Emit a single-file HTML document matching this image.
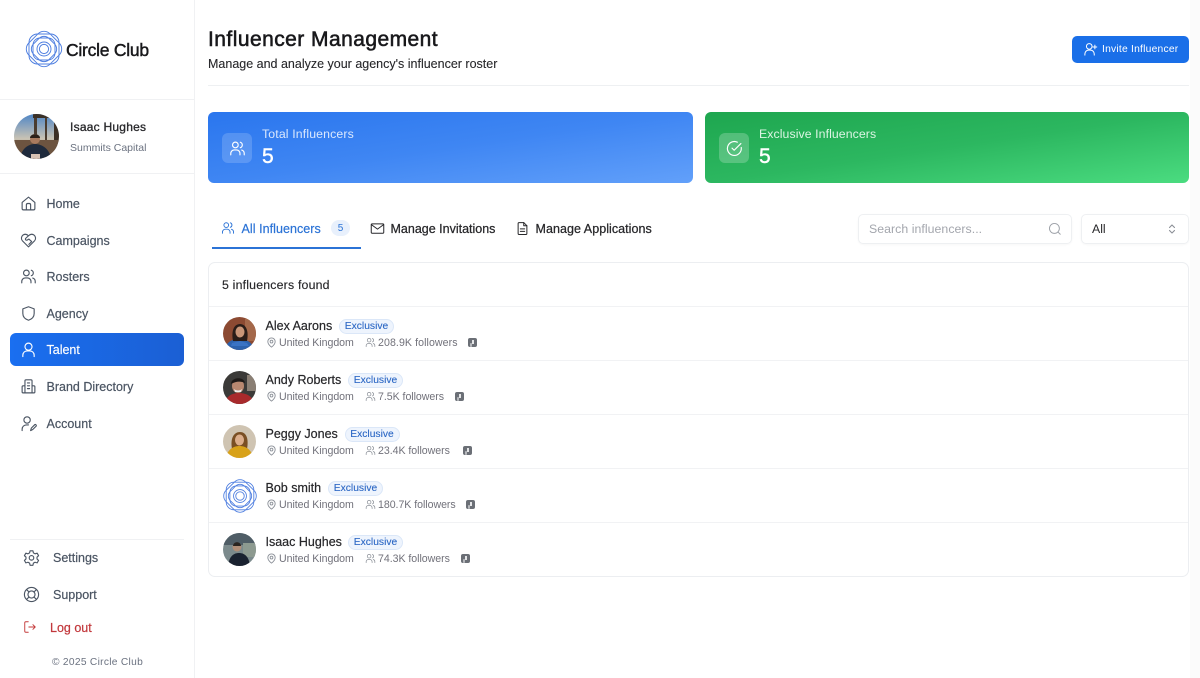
<!DOCTYPE html>
<html lang="en">
<head>
<meta charset="utf-8">
<title>Influencer Management</title>
<style>
*{box-sizing:border-box;margin:0;padding:0}
html,body{width:1200px;height:678px;overflow:hidden;background:#fff;font-family:"Liberation Sans",sans-serif;color:#18181b}
.t{position:absolute;white-space:nowrap;line-height:1}
svg{position:absolute;display:block;overflow:visible}
.i{fill:none;stroke:currentColor;stroke-width:1.6;stroke-linecap:round;stroke-linejoin:round}
.box{position:absolute}
.nav{font-size:12.5px;color:#4b5563;letter-spacing:0;-webkit-text-stroke:.2px #4b5563}
.nicon{color:#4b5563}
.name{font-size:12.5px;color:#27272a;letter-spacing:0;-webkit-text-stroke:.2px #27272a}
.sub{font-size:10.6px;color:#71717a;letter-spacing:-.04px}
.badge{position:absolute;height:15px;border-radius:8px;background:#eef4fd;border:1px solid #dbe7f8;color:#2a66c4;font-size:10.3px;line-height:13px;text-align:center;letter-spacing:0;-webkit-text-stroke:.1px #2a66c4}
.sep{position:absolute;left:209px;width:979px;height:1px;background:#f1f2f4}
.tk{position:absolute;width:9px;height:9px;background:#6b6f76;border-radius:2px}
.tk:after{content:"";position:absolute;left:4px;top:2px;width:2px;height:4px;background:#e4e5e7;box-shadow:-2px 3px 0 -0.2px #c9cacd}
.tab{font-size:12.5px;color:#27272a;letter-spacing:0;-webkit-text-stroke:.25px #27272a}
</style>
</head>
<body>
<svg width="0" height="0" style="position:absolute">
<defs>
<g id="logo" fill="none" stroke="#4f7fe0" stroke-width=".95">
<circle cx="0" cy="0" r="4.6"/>
<circle cx="0" cy="0" r="7"/>
<rect x="-15" y="-15" width="30" height="30" rx="8.5"/>
<rect x="-15" y="-15" width="30" height="30" rx="8.5" transform="rotate(45)"/>
<rect x="-11" y="-11" width="22" height="22" rx="7"/>
<rect x="-11" y="-11" width="22" height="22" rx="7" transform="rotate(45)"/>
</g>
<g id="users" class="i">
<circle cx="9" cy="7" r="4"/>
<path d="M2.500 21v-2a5 5 0 0 1 5-5h3a5 5 0 0 1 5 5v2"/>
<path d="M16 3.200a4 4 0 0 1 0 7.600"/>
<path d="M21.500 21v-2a5 5 0 0 0-3.500-4.800"/>
</g>
<g id="pin" class="i" style="stroke-width:2">
<path d="M12 22s-8-6-8-12a8 8 0 0 1 16 0c0 6-8 12-8 12z"/>
<circle cx="12" cy="10" r="3"/>
</g>
</defs>
</svg>

<!-- Sidebar -->
<div class="box" style="left:0;top:0;width:195px;height:678px;background:#fff;border-right:1px solid #f0f1f3"></div>
<svg style="left:44px;top:49px" width="1" height="1"><use href="#logo"/></svg>
<div class="t" style="left:66px;top:41.500px;font-size:17.500px;color:#18181b;letter-spacing:-.25px;-webkit-text-stroke:.45px #18181b">Circle Club</div>
<div class="box" style="left:0;top:99px;width:194px;height:1px;background:#f0f1f3"></div>

<svg style="left:14px;top:114px" width="45" height="45" viewBox="0 0 45 45">
<defs>
<clipPath id="c0"><circle cx="22.500" cy="22.500" r="22.500"/></clipPath>
<linearGradient id="sky" x1="0" y1="0" x2="0" y2="1"><stop offset="0" stop-color="#4f86c6"/><stop offset=".55" stop-color="#c9c3b4"/><stop offset="1" stop-color="#7a6350"/></linearGradient>
</defs>
<g clip-path="url(#c0)">
<rect width="45" height="45" fill="url(#sky)"/>
<rect x="19" y="0" width="26" height="4" fill="#3a3026"/>
<rect x="20" y="4" width="3" height="22" fill="#4a3c30"/>
<rect x="31" y="4" width="2" height="24" fill="#4a3c30"/>
<rect x="40" y="0" width="5" height="45" fill="#3c3026"/>
<rect x="0" y="26" width="45" height="19" fill="#6d5440"/>
<path d="M6 45c1-10 8-15 15-15s15 5 16 15z" fill="#1f2a3c"/>
<circle cx="21" cy="25" r="5" fill="#a87a5e"/>
<path d="M16 24c0-5 10-5 10 0z" fill="#2b2018"/>
<rect x="17" y="40" width="9" height="5" fill="#d8c2b4"/>
</g>
</svg>
<div class="t" style="left:70px;top:121px;font-size:12px;color:#27272a;letter-spacing:.24px;-webkit-text-stroke:.3px #27272a">Isaac Hughes</div>
<div class="t" style="left:70px;top:143px;font-size:10.500px;color:#6b7280;letter-spacing:0">Summits Capital</div>
<div class="box" style="left:0;top:173px;width:194px;height:1px;background:#f0f1f3"></div>

<!-- Nav -->
<svg class="nicon" style="left:20px;top:195px" width="17" height="17" viewBox="0 0 24 24"><path class="i" d="M3 10.500 12 3l9 7.500V19a2 2 0 0 1-2 2H5a2 2 0 0 1-2-2z"/><path class="i" d="M9 21v-7a2 2 0 0 1 2-2h2a2 2 0 0 1 2 2v7"/></svg>
<div class="t nav" style="left:46.500px;top:198px">Home</div>

<svg class="nicon" style="left:20px;top:232px" width="17" height="17" viewBox="0 0 24 24"><path class="i" d="M12 21 3.500 12.500A5.500 5.500 0 0 1 4 4.500c2.500-2 5.500-1.500 8 .8 2.500-2.300 5.500-2.800 8-.8a5.500 5.500 0 0 1 .5 8z"/><path class="i" d="M12 5.300 8 9c-1 1 0 3 2 2.500l2.500-1.500 4 3.500-4 4"/></svg>
<div class="t nav" style="left:46.500px;top:235px">Campaigns</div>

<svg class="nicon" style="left:20px;top:268px" width="17" height="17" viewBox="0 0 24 24"><use href="#users"/></svg>
<div class="t nav" style="left:46.500px;top:271px">Rosters</div>

<svg class="nicon" style="left:20px;top:305px" width="17" height="17" viewBox="0 0 24 24"><path class="i" d="M12 2.500 20 5.500v6.500c0 5-3.500 8-8 9.500-4.500-1.500-8-4.500-8-9.500V5.500z"/></svg>
<div class="t nav" style="left:46.500px;top:308px">Agency</div>

<div class="box" style="left:10px;top:333px;width:174px;height:33px;border-radius:6px;background:linear-gradient(90deg,#1a6ff0,#1b5fd4)"></div>
<svg style="left:20px;top:341px;color:#fff" width="17" height="17" viewBox="0 0 24 24"><circle class="i" cx="12" cy="8" r="5"/><path class="i" d="M4 22v-2a6 6 0 0 1 6-6h4a6 6 0 0 1 6 6v2"/></svg>
<div class="t nav" style="left:46.500px;top:344px;color:#fff;-webkit-text-stroke:.15px #fff">Talent</div>

<svg class="nicon" style="left:20px;top:378px" width="17" height="17" viewBox="0 0 24 24"><path class="i" d="M7 21V4a1.500 1.500 0 0 1 1.500-1.500h7A1.500 1.500 0 0 1 17 4v17"/><path class="i" d="M7 11H4.500A1.500 1.500 0 0 0 3 12.500V19.500A1.500 1.500 0 0 0 4.500 21h15a1.500 1.500 0 0 0 1.500-1.500v-7a1.500 1.500 0 0 0-1.500-1.500H17"/><path class="i" d="M10.500 7h3M10.500 11h3M10.500 15h3"/></svg>
<div class="t nav" style="left:46.500px;top:381px">Brand Directory</div>

<svg class="nicon" style="left:20px;top:415px" width="17" height="17" viewBox="0 0 24 24"><circle class="i" cx="10" cy="7" r="4.500"/><path class="i" d="M3 22v-2a6 6 0 0 1 6-6h3"/><path class="i" d="M15 22l1-3.500 5-5a1.600 1.600 0 0 1 2 2l-5 5z"/></svg>
<div class="t nav" style="left:46.500px;top:418px">Account</div>

<div class="box" style="left:10px;top:539px;width:174px;height:1px;background:#f0f1f3"></div>

<svg class="nicon" style="left:23px;top:549px" width="17" height="17" viewBox="0 0 24 24"><path class="i" d="M10 2.500h4l.7 3 2.300 1.300 3-.9 2 3.500-2.200 2.100v2.600L22 16.100l-2 3.500-3-.9-2.300 1.300-.7 3h-4l-.7-3L7 18.700l-3 .9-2-3.500 2.200-2.100v-2.600L2 9.400l2-3.500 3 .9 2.300-1.300z"/><circle class="i" cx="12" cy="12.500" r="3.200"/></svg>
<div class="t nav" style="left:53px;top:552px">Settings</div>

<svg class="nicon" style="left:23px;top:586px" width="17" height="17" viewBox="0 0 24 24"><circle class="i" cx="12" cy="12" r="10"/><circle class="i" cx="12" cy="12" r="5"/><path class="i" d="M5 5l3.500 3.500M19 5l-3.500 3.500M5 19l3.500-3.500M19 19l-3.500-3.500"/></svg>
<div class="t nav" style="left:53px;top:589px">Support</div>

<svg style="left:23px;top:620px;color:#c43a3a" width="14" height="14" viewBox="0 0 24 24"><path class="i" d="M9 3H5a2 2 0 0 0-2 2v14a2 2 0 0 0 2 2h4"/><path class="i" d="M10 12h11M17 8l4 4-4 4"/></svg>
<div class="t nav" style="left:50px;top:622px;color:#c2383c;-webkit-text-stroke:.2px #c2383c">Log out</div>
<div class="t" style="left:52px;top:658px;font-size:10.200px;color:#6b7280;letter-spacing:.3px">© 2025 Circle Club</div>

<!-- Header -->
<div class="t" style="left:208px;top:29px;font-size:21px;color:#18181b;letter-spacing:.45px;-webkit-text-stroke:.55px #18181b">Influencer Management</div>
<div class="t" style="left:208px;top:58px;font-size:12.500px;color:#27272a;letter-spacing:0;-webkit-text-stroke:.1px #27272a">Manage and analyze your agency's influencer roster</div>
<div class="box" style="left:208px;top:85px;width:981px;height:1px;background:#eef0f2"></div>

<div class="box" style="left:1072px;top:36px;width:117px;height:27px;border-radius:5px;background:#1a6fe8"></div>
<svg style="left:1082.500px;top:41.500px;color:#fff" width="15" height="15" viewBox="0 0 24 24"><circle class="i" cx="10" cy="7" r="4.500"/><path class="i" d="M3 21v-2a6 6 0 0 1 6-6h3a6 6 0 0 1 6 6v2"/><path class="i" d="M19 5v6M16 8h6"/></svg>
<div class="t" style="left:1102px;top:45px;font-size:10.300px;color:#fff;letter-spacing:.22px">Invite Influencer</div>

<!-- Stat cards -->
<div class="box" style="left:208px;top:112px;width:485px;height:71px;border-radius:6px;background:linear-gradient(to bottom right,#2a76ee 0%,#3f86f3 50%,#62a0fa 100%)"></div>
<div class="box" style="left:222px;top:133px;width:30px;height:30px;border-radius:6px;background:rgba(255,255,255,.17)"></div>
<svg style="left:228.500px;top:139.500px;color:#fff" width="17" height="17" viewBox="0 0 24 24"><use href="#users"/></svg>
<div class="t" style="left:262px;top:128px;font-size:12.300px;color:#dbe8fd;letter-spacing:.14px">Total Influencers</div>
<div class="t" style="left:262px;top:146px;font-size:21px;color:#fff;-webkit-text-stroke:.4px #fff">5</div>

<div class="box" style="left:705px;top:112px;width:484px;height:71px;border-radius:6px;background:linear-gradient(to bottom right,#1ea64f 0%,#2cb760 50%,#4bdc80 100%)"></div>
<div class="box" style="left:719px;top:133px;width:30px;height:30px;border-radius:6px;background:rgba(255,255,255,.22)"></div>
<svg style="left:725.500px;top:139.500px;color:#fff" width="17" height="17" viewBox="0 0 24 24"><path class="i" d="M21.500 10.500A9.800 9.800 0 1 1 16 3.100"/><path class="i" d="M8.500 11.500l3 3L21 5"/></svg>
<div class="t" style="left:759px;top:128px;font-size:12.300px;color:#dcf5e4;letter-spacing:.08px">Exclusive Influencers</div>
<div class="t" style="left:759px;top:146px;font-size:21px;color:#fff;-webkit-text-stroke:.4px #fff">5</div>

<!-- Tabs -->
<div class="box" style="left:212px;top:247px;width:149px;height:2px;background:#2b73d6"></div>
<svg style="left:221px;top:221px;color:#2b73d6" width="14" height="14" viewBox="0 0 24 24"><use href="#users"/></svg>
<div class="t tab" style="left:241.500px;top:223px;color:#2b73d6;-webkit-text-stroke:.2px #2b73d6;letter-spacing:.05px">All Influencers</div>
<div class="box" style="left:331px;top:220px;width:19px;height:16px;border-radius:8px;background:#e8f0fc;color:#2b73d6;font-size:10px;line-height:17px;text-align:center">5</div>

<svg style="left:369.500px;top:221px;color:#27272a" width="15" height="15" viewBox="0 0 24 24"><rect class="i" x="2" y="4.500" width="20" height="15" rx="1.500"/><path class="i" d="M2.500 6l9.500 7 9.500-7"/></svg>
<div class="t tab" style="left:390.500px;top:223px">Manage Invitations</div>
<svg style="left:515px;top:221px;color:#27272a" width="15" height="15" viewBox="0 0 24 24"><path class="i" d="M14 2.500H6.500A1.500 1.500 0 0 0 5 4v16a1.500 1.500 0 0 0 1.500 1.500h11A1.500 1.500 0 0 0 19 20V7.500z"/><path class="i" d="M14 2.500v5h5M8.500 12.500h7M8.500 16.500h7"/></svg>
<div class="t tab" style="left:535.500px;top:223px;letter-spacing:.05px">Manage Applications</div>

<!-- Search -->
<div class="box" style="left:858px;top:214px;width:214px;height:30px;border:1px solid #eef0f2;border-radius:5px;box-shadow:0 1px 2px rgba(0,0,0,.03)"></div>
<div class="t" style="left:869px;top:223px;font-size:12.300px;color:#a3a6ad;letter-spacing:.05px">Search influencers...</div>
<svg style="left:1048px;top:222px;color:#9ca0a7" width="14" height="14" viewBox="0 0 24 24"><circle class="i" cx="11" cy="11" r="8.500"/><path class="i" d="M21 21l-3.800-3.800"/></svg>
<div class="box" style="left:1081px;top:214px;width:108px;height:30px;border:1px solid #eef0f2;border-radius:5px;box-shadow:0 1px 2px rgba(0,0,0,.03)"></div>
<div class="t" style="left:1092px;top:223px;font-size:12.300px;color:#27272a">All</div>
<svg style="left:1167px;top:223px;color:#8b8f96" width="10" height="12" viewBox="0 0 10 12"><path class="i" style="stroke-width:1.100" d="M2.500 4.500 5 2l2.500 2.500M2.500 7.500 5 10l2.500-2.500"/></svg>

<!-- List -->
<div class="box" style="left:208px;top:262px;width:981px;height:315px;border:1px solid #eceef1;border-radius:7px"></div>
<div class="t" style="left:222px;top:278.500px;font-size:12.300px;color:#27272a;letter-spacing:.2px;-webkit-text-stroke:.15px #27272a">5 influencers found</div>
<div class="sep" style="top:306px"></div>
<div class="sep" style="top:360px"></div>
<div class="sep" style="top:414px"></div>
<div class="sep" style="top:468px"></div>
<div class="sep" style="top:522px"></div>

<!-- Row 1 -->
<svg style="left:223px;top:317px" width="33" height="33" viewBox="0 0 33 33"><defs><clipPath id="c1"><circle cx="16.500" cy="16.500" r="16.500"/></clipPath></defs><g clip-path="url(#c1)"><rect width="33" height="33" fill="#8c4a32"/><rect x="22" width="11" height="24" fill="#a4684a"/><path d="M2 33c1-8 7-11 14-11s14 3 15 11z" fill="#2d62ad"/><path d="M10 24c-2-10 1-17 7-17s9 7 7 17z" fill="#2a1d18"/><ellipse cx="17" cy="15" rx="4.500" ry="5.500" fill="#c99678"/><path d="M9 26l8-2 7 2 2 3H8z" fill="#3a73c4"/></g></svg>
<div class="t name" style="left:265.500px;top:320px">Alex Aarons</div>
<div class="badge" style="left:339px;top:318.500px;width:55px">Exclusive</div>
<svg style="left:265.500px;top:337px;color:#8b9098" width="11" height="11" viewBox="0 0 24 24"><use href="#pin"/></svg>
<div class="t sub" style="left:279px;top:338px">United Kingdom</div>
<svg style="left:364.500px;top:337px;color:#8b9098" width="11" height="11" viewBox="0 0 24 24"><use href="#users"/></svg>
<div class="t sub" style="left:378px;top:338px;letter-spacing:.08px">208.9K followers</div>
<div class="tk" style="left:468px;top:338px"></div>

<!-- Row 2 -->
<svg style="left:223px;top:371px" width="33" height="33" viewBox="0 0 33 33"><defs><clipPath id="c2"><circle cx="16.500" cy="16.500" r="16.500"/></clipPath></defs><g clip-path="url(#c2)"><rect width="33" height="33" fill="#3b3a38"/><rect x="24" y="4" width="9" height="16" fill="#8a7f74"/><path d="M2 33c1-8 7-11 14-11s14 3 15 11z" fill="#a82a2c"/><ellipse cx="15" cy="15" rx="6" ry="7" fill="#b88870"/><path d="M8 13c0-7 13-8 14-1-4-2-9-2-14 1z" fill="#1e1a18"/><path d="M11 18c2 2 6 2 8 0l-1 3h-6z" fill="#eee"/></g></svg>
<div class="t name" style="left:265.500px;top:374px">Andy Roberts</div>
<div class="badge" style="left:348px;top:372.500px;width:55px">Exclusive</div>
<svg style="left:265.500px;top:391px;color:#8b9098" width="11" height="11" viewBox="0 0 24 24"><use href="#pin"/></svg>
<div class="t sub" style="left:279px;top:392px">United Kingdom</div>
<svg style="left:364.500px;top:391px;color:#8b9098" width="11" height="11" viewBox="0 0 24 24"><use href="#users"/></svg>
<div class="t sub" style="left:378px;top:392px">7.5K followers</div>
<div class="tk" style="left:454.500px;top:392px"></div>

<!-- Row 3 -->
<svg style="left:223px;top:425px" width="33" height="33" viewBox="0 0 33 33"><defs><clipPath id="c3"><circle cx="16.500" cy="16.500" r="16.500"/></clipPath></defs><g clip-path="url(#c3)"><rect width="33" height="33" fill="#cfc4b2"/><path d="M9 24c-2-11 2-17 8-17s9 6 7 17z" fill="#7a4f24"/><ellipse cx="16.500" cy="15" rx="4.500" ry="5.500" fill="#dcae8c"/><path d="M3 33c1-8 7-12 13.500-12S29 25 30 33z" fill="#d8a21a"/></g></svg>
<div class="t name" style="left:265.500px;top:428px">Peggy Jones</div>
<div class="badge" style="left:344.500px;top:426.500px;width:55px">Exclusive</div>
<svg style="left:265.500px;top:445px;color:#8b9098" width="11" height="11" viewBox="0 0 24 24"><use href="#pin"/></svg>
<div class="t sub" style="left:279px;top:446px">United Kingdom</div>
<svg style="left:364.500px;top:445px;color:#8b9098" width="11" height="11" viewBox="0 0 24 24"><use href="#users"/></svg>
<div class="t sub" style="left:378px;top:446px">23.4K followers</div>
<div class="tk" style="left:462.500px;top:446px"></div>

<!-- Row 4 -->
<svg style="left:239.500px;top:495.500px" width="1" height="1"><use href="#logo" transform="scale(.92)"/></svg>
<div class="t name" style="left:265.500px;top:482px">Bob smith</div>
<div class="badge" style="left:328px;top:480.500px;width:55px">Exclusive</div>
<svg style="left:265.500px;top:499px;color:#8b9098" width="11" height="11" viewBox="0 0 24 24"><use href="#pin"/></svg>
<div class="t sub" style="left:279px;top:500px">United Kingdom</div>
<svg style="left:364.500px;top:499px;color:#8b9098" width="11" height="11" viewBox="0 0 24 24"><use href="#users"/></svg>
<div class="t sub" style="left:378px;top:500px">180.7K followers</div>
<div class="tk" style="left:466px;top:500px"></div>

<!-- Row 5 -->
<svg style="left:223px;top:533px" width="33" height="33" viewBox="0 0 33 33"><defs><clipPath id="c5"><circle cx="16.500" cy="16.500" r="16.500"/></clipPath></defs><g clip-path="url(#c5)"><rect width="33" height="33" fill="#7b8a8c"/><rect y="0" width="33" height="12" fill="#4f5d66"/><rect x="20" y="10" width="13" height="14" fill="#8d9a90"/><path d="M5 33c1-9 5-13 11-13s10 4 11 13z" fill="#1a2230"/><circle cx="14" cy="14" r="4.500" fill="#b08e78"/><path d="M10 13c0-5 8-5 8 0z" fill="#2a2420"/></g></svg>
<div class="t name" style="left:265.500px;top:536px">Isaac Hughes</div>
<div class="badge" style="left:348px;top:534.500px;width:55px">Exclusive</div>
<svg style="left:265.500px;top:553px;color:#8b9098" width="11" height="11" viewBox="0 0 24 24"><use href="#pin"/></svg>
<div class="t sub" style="left:279px;top:554px">United Kingdom</div>
<svg style="left:364.500px;top:553px;color:#8b9098" width="11" height="11" viewBox="0 0 24 24"><use href="#users"/></svg>
<div class="t sub" style="left:378px;top:554px">74.3K followers</div>
<div class="tk" style="left:461px;top:554px"></div>

<div class="box" style="left:1190px;top:0;width:10px;height:678px;background:#fbfbfb"></div>
</body>
</html>
